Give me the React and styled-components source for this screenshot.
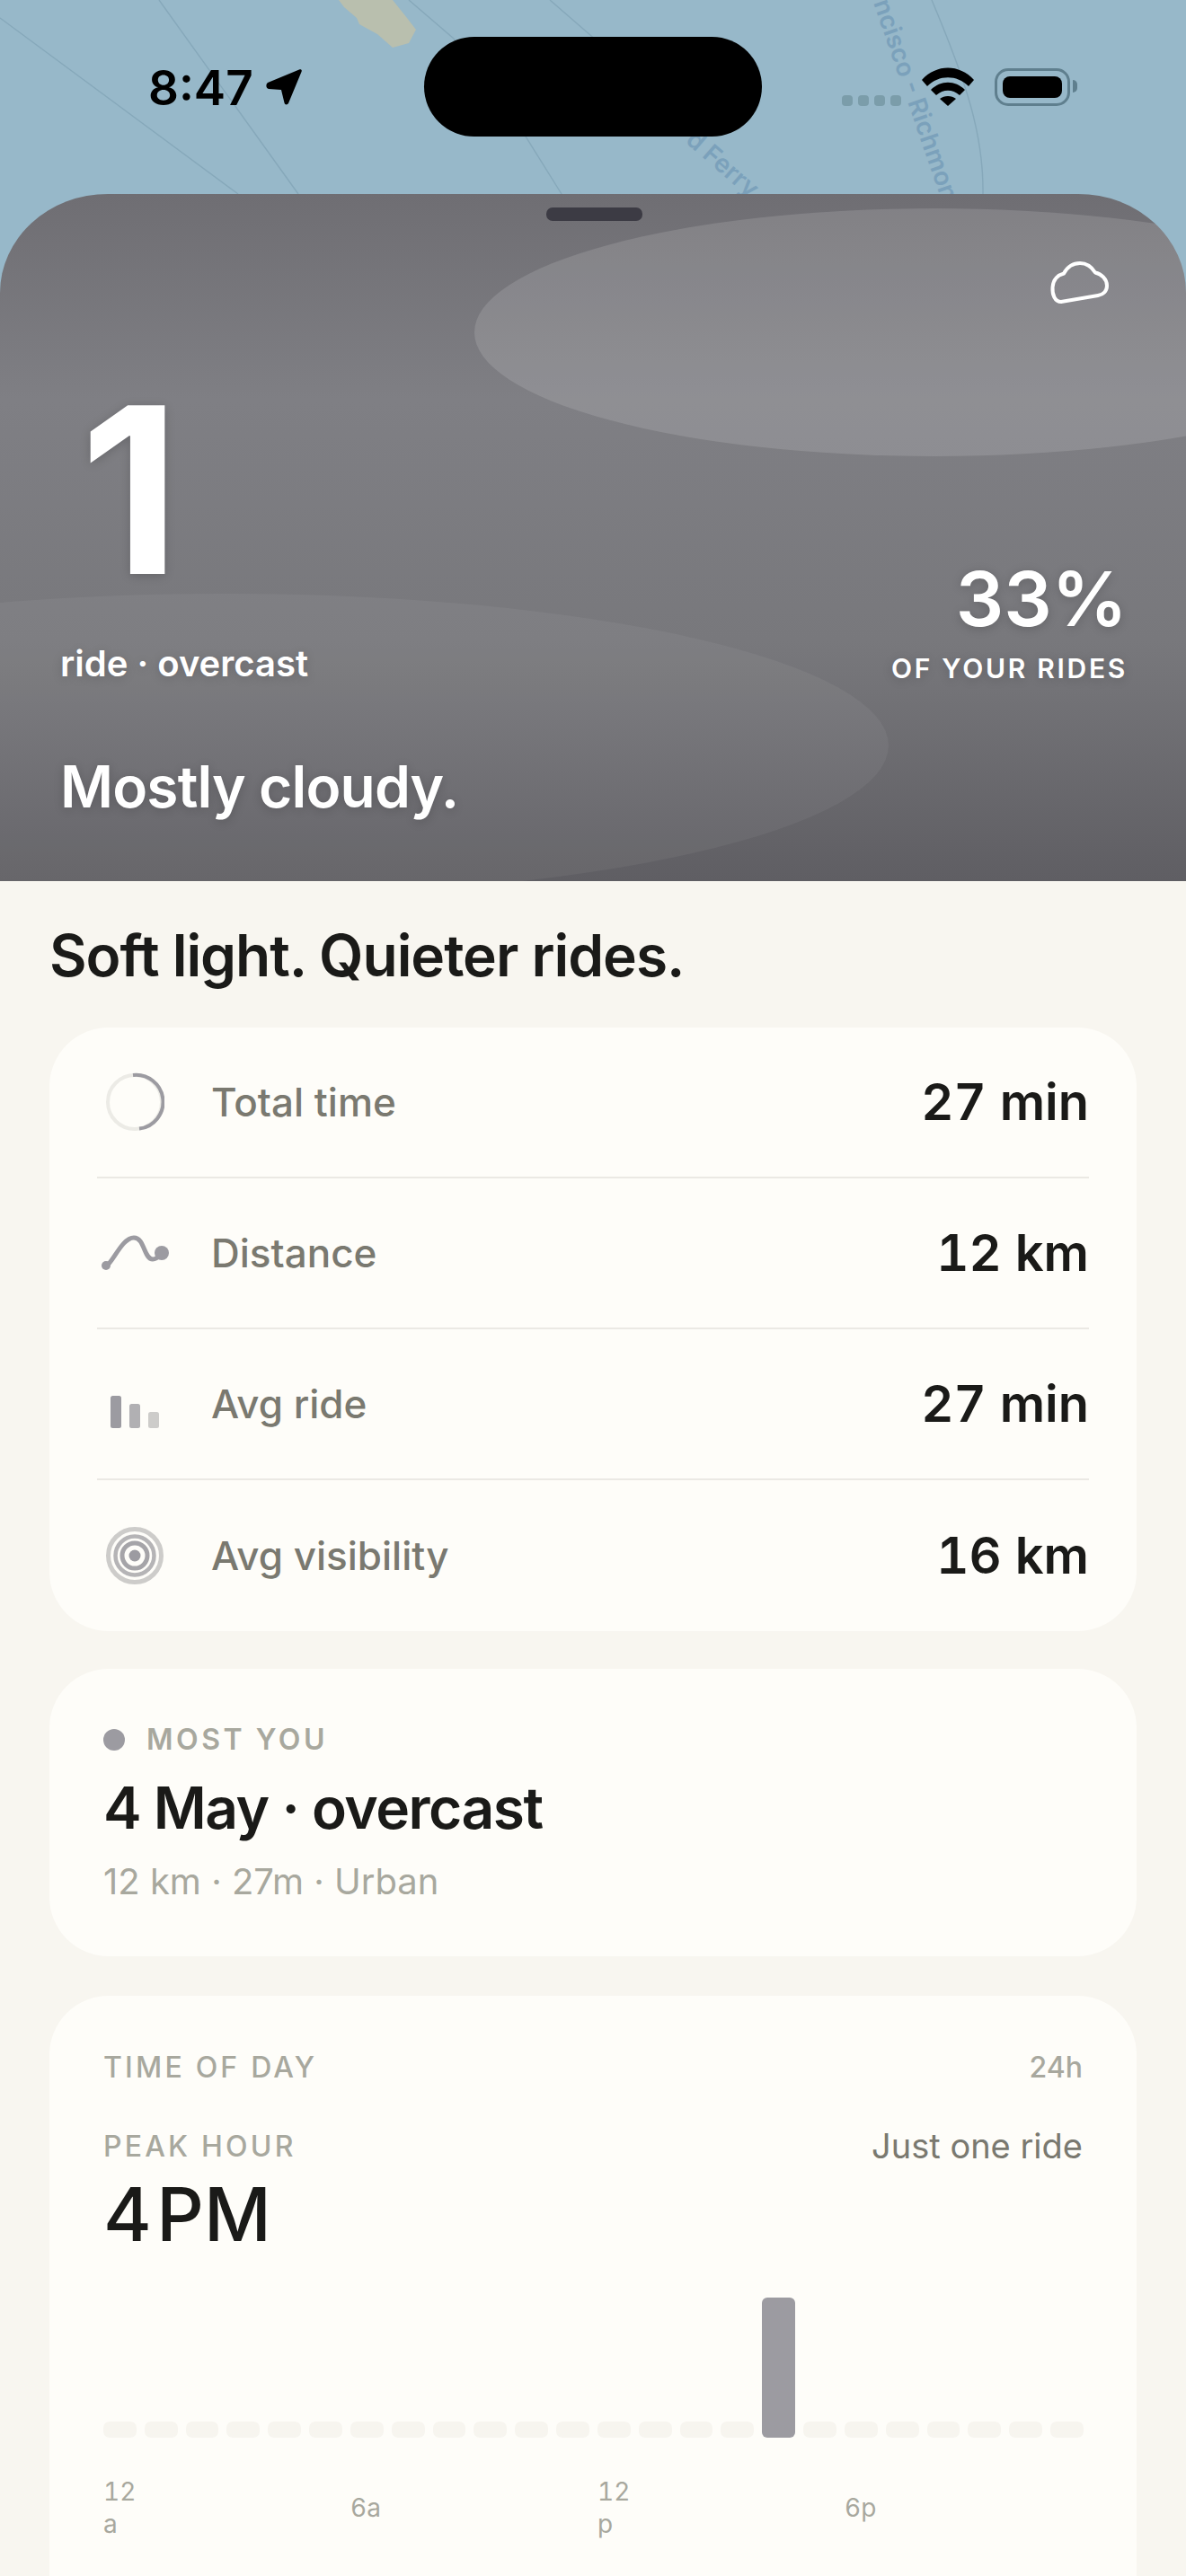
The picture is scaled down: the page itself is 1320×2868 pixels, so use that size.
import React from "react";
import styled, { createGlobalStyle } from "styled-components";

const GlobalStyle = createGlobalStyle`
  html, body {
    margin: 0;
    padding: 0;
    background: #f8f6f0;
  }
  * {
    box-sizing: border-box;
  }
`;

const stats = [
  { icon: "ring", label: "Total time", value: "27 min" },
  { icon: "route", label: "Distance", value: "12 km" },
  { icon: "bars", label: "Avg ride", value: "27 min" },
  { icon: "target", label: "Avg visibility", value: "16 km" },
];

const hours = Array.from({ length: 24 }, (_, i) => i);
const axisLabels = { 0: "12a", 6: "6a", 12: "12p", 18: "6p" };

function StatIcon({ name }) {
  if (name === "ring") {
    return (
      <svg width="66" height="66" viewBox="0 0 66 66" fill="none">
        <circle cx="33" cy="33" r="30" stroke="#ecebe6" strokeWidth="4" />
        <path d="M31 3a30 30 0 0 1 7 59.6" stroke="#9c9ba1" strokeWidth="4" />
      </svg>
    );
  }
  if (name === "route") {
    return (
      <svg width="76" height="40" viewBox="0 0 76 40" fill="none">
        <path d="M6 35C14 30 24 3 37 3c12 0 11 24 21 24 4 0 7-3 10-6" stroke="#9c9ba1" strokeWidth="5" strokeLinecap="round" />
        <circle cx="6" cy="34" r="5" fill="#9c9ba1" />
        <circle cx="68" cy="20" r="8" fill="#9c9ba1" />
      </svg>
    );
  }
  if (name === "bars") {
    return (
      <svg width="54" height="54" viewBox="0 0 54 54">
        <rect x="0" y="18" width="12" height="36" rx="2.5" fill="#9c9ba1" />
        <rect x="21" y="27" width="12" height="27" rx="2.5" fill="#b1b0b3" />
        <rect x="42" y="36" width="12" height="18" rx="2.5" fill="#cdccca" />
      </svg>
    );
  }
  return (
    <svg width="66" height="66" viewBox="0 0 66 66" fill="none">
      <circle cx="33" cy="33" r="29.5" stroke="#cdccca" strokeWidth="5" />
      <circle cx="33" cy="33" r="21.5" stroke="#b5b4b6" strokeWidth="4.5" />
      <circle cx="33" cy="33" r="14" stroke="#a5a4a8" strokeWidth="5" />
      <circle cx="33" cy="33" r="6.5" fill="#9c9ba1" />
    </svg>
  );
}

export default function App() {
  return (
    <>
      <GlobalStyle />
      <Screen>
        <MapHeader>
          <MapDrawing viewBox="0 0 1320 330">
            <rect width="1320" height="330" fill="#97b8c9" />
            <path d="M0 20L265 216M177 0L332 216M455 0L505 43L585 152L640 240M612 0L665 46M1037 0C1075 90 1095 150 1094 216" stroke="#86a8ba" strokeWidth="1.4" fill="none" />
            <path d="M377 0L383 8L397 20L400 27L420 38L437 53L455 48L463 33L453 20L437 0Z" fill="#b9bfae" />
            <MapLabel transform="translate(972 3) rotate(71)">ncisco - Richmond</MapLabel>
            <MapLabel transform="translate(762 158) rotate(41)">d Ferry</MapLabel>
          </MapDrawing>
          <StatusBar>
            <Clock>
              8:47
              <svg width="42" height="42" viewBox="0 0 42 42">
                <path d="M2 15L37 .5c2-1 3.5.5 2.5 2.5L25 38c-1 2-4 2-4.5-.5L17 23 3 22c-3-.5-3.5-5-1-7z" fill="#000" />
              </svg>
            </Clock>
            <Island />
            <StatusIcons>
              <SignalDots>
                <i /><i /><i /><i />
              </SignalDots>
              <svg width="58" height="43" viewBox="0 0 58 43" fill="#000">
                <path d="M0 14C16-4 42-4 58 14l-6 7C39 8 19 8 6 21z" />
                <path d="M10 25c11-11 27-11 38 0l-6 6c-8-7-18-7-26 0z" />
                <path d="M20 35c5-4 13-4 18 0l-9 8z" />
              </svg>
              <Battery><BatteryFill /></Battery>
            </StatusIcons>
          </StatusBar>
        </MapHeader>

        <Hero>
          <Blob $left={528} $top={232} $width={1024} $height={276} $tone={0.13} />
          <Blob $left={-489} $top={661} $width={1478} $height={338} $tone={0.05} />
          <Grabber />
          <CloudMark>
            <svg width="66" height="48" viewBox="0 0 66 48" fill="none">
              <path d="M12 45C5 45 2 37 2.500 29 3 20 9 15 15 13.500 19 6 26 2 33 2c8 0 13 4 17 10.500C57 14 63 20 63 27c0 6-4 10-10 11z" stroke="#fff" strokeWidth="4" strokeLinejoin="round" />
            </svg>
          </CloudMark>
          <HeroNumber>1</HeroNumber>
          <HeroRow>
            <HeroCaption>ride · overcast</HeroCaption>
            <ShareBlock>
              <SharePercent>33%</SharePercent>
              <ShareLabel>OF YOUR RIDES</ShareLabel>
            </ShareBlock>
          </HeroRow>
          <HeroTitle>Mostly cloudy.</HeroTitle>
        </Hero>

        <Content>
          <Tagline>Soft light. Quieter rides.</Tagline>

          <Card>
            {stats.map((s) => (
              <StatRow key={s.label}>
                <IconSlot><StatIcon name={s.icon} /></IconSlot>
                <StatLabel>{s.label}</StatLabel>
                <StatValue>{s.value}</StatValue>
              </StatRow>
            ))}
          </Card>

          <MostCard>
            <Eyebrow><Dot />MOST YOU</Eyebrow>
            <MostTitle>4 May · overcast</MostTitle>
            <MostSub>12 km · 27m · Urban</MostSub>
          </MostCard>

          <TimeCard>
            <SplitRow>
              <SectionLabel>TIME OF DAY</SectionLabel>
              <RangeLabel>24h</RangeLabel>
            </SplitRow>
            <PeakRow>
              <SectionLabel>PEAK HOUR</SectionLabel>
              <PeakNote>Just one ride</PeakNote>
            </PeakRow>
            <PeakValue>4 PM</PeakValue>
            <Chart>
              {hours.map((h) => (
                <HourBar key={h} $active={h === 16} />
              ))}
            </Chart>
            <Axis>
              {hours.map((h) => (
                <AxisLabel key={h}>{axisLabels[h]}</AxisLabel>
              ))}
            </Axis>
          </TimeCard>
        </Content>
      </Screen>
    </>
  );
}

const Screen = styled.div`
  position: relative;
  width: 1320px;
  height: 2868px;
  overflow: hidden;
  background: #f8f6f0;
  font-family: Inter, "Liberation Sans", sans-serif;
`;

const MapHeader = styled.div`
  position: relative;
  height: 330px;
  margin-bottom: -114px;
`;

const MapDrawing = styled.svg`
  position: absolute;
  inset: 0;
  width: 100%;
  height: 100%;
`;

const MapLabel = styled.text`
  font-family: Inter, sans-serif;
  font-size: 28px;
  font-weight: 600;
  fill: #7ba1bb;
`;

const StatusBar = styled.div`
  position: relative;
  display: flex;
  align-items: flex-start;
  height: 152px;
  padding: 41px 0 0 165px;
`;

const Clock = styled.div`
  display: flex;
  align-items: center;
  gap: 14px;
  width: 307px;
  height: 111px;
  padding-top: 3px;
  font-size: 53px;
  font-weight: 600;
  color: #000;
`;

const Island = styled.div`
  width: 376px;
  height: 111px;
  border-radius: 56px;
  background: #000;
`;

const StatusIcons = styled.div`
  display: flex;
  align-items: flex-end;
  margin-left: 89px;
  margin-top: 34px;
  height: 43px;
`;

const SignalDots = styled.div`
  display: flex;
  gap: 6px;
  margin-right: 23px;
  i {
    display: block;
    width: 12px;
    height: 12px;
    border-radius: 4px;
    background: #7b9daa;
  }
`;

const Battery = styled.div`
  position: relative;
  width: 84px;
  height: 42px;
  margin-left: 23px;
  padding: 6px;
  border: 3.5px solid #5f7f8e;
  border-radius: 15px;
  &::after {
    content: "";
    position: absolute;
    right: -11px;
    top: 10px;
    width: 5px;
    height: 14px;
    border-radius: 0 5px 5px 0;
    background: #5f7f8e;
  }
`;

const BatteryFill = styled.div`
  width: 100%;
  height: 100%;
  border-radius: 8px;
  background: #000;
`;

const Hero = styled.section`
  position: relative;
  isolation: isolate;
  display: flex;
  flex-direction: column;
  height: 765px;
  padding: 0 65px 0 67px;
  overflow: hidden;
  color: #fff;
  text-shadow: 0 2px 12px rgba(0, 0, 0, 0.18);
  border-radius: 120px 120px 0 0 / 110px 110px 0 0;
  background: linear-gradient(180deg, #6f6e73 0%, #7f7f84 30%, #78787c 65%, #5f5e63 100%);
`;

const Blob = styled.div`
  position: absolute;
  z-index: -1;
  left: ${(p) => p.$left}px;
  top: ${(p) => p.$top - 216}px;
  width: ${(p) => p.$width}px;
  height: ${(p) => p.$height}px;
  border-radius: 50%;
  background: rgba(255, 255, 255, ${(p) => p.$tone});
`;

const Grabber = styled.div`
  width: 107px;
  height: 15px;
  margin: 15px auto 0;
  border-radius: 7px;
  background: #3c3b44;
`;

const CloudMark = styled.div`
  position: absolute;
  top: 75px;
  right: 85px;
  line-height: 0;
`;

const HeroNumber = styled.div`
  height: 195px;
  margin: 170px 0 0 22px;
  font-size: 258px;
  font-weight: 700;
  line-height: 258px;
  letter-spacing: -0.02em;
`;

const HeroRow = styled.div`
  display: flex;
  justify-content: space-between;
  align-items: flex-end;
  margin-top: 6px;
`;

const HeroCaption = styled.div`
  padding-bottom: 2px;
  font-size: 40px;
  font-weight: 600;
  line-height: 46px;
`;

const ShareBlock = styled.div`
  display: flex;
  flex-direction: column;
  align-items: flex-end;
`;

const SharePercent = styled.div`
  font-size: 84px;
  font-weight: 600;
  line-height: 100px;
`;

const ShareLabel = styled.div`
  margin-top: 7px;
  font-size: 30px;
  font-weight: 600;
  line-height: 40px;
  letter-spacing: 0.09em;
`;

const HeroTitle = styled.h1`
  margin: 72px 0 0;
  font-size: 64px;
  font-weight: 600;
  line-height: 80px;
  letter-spacing: -0.013em;
`;

const Content = styled.main`
  display: flex;
  flex-direction: column;
  padding: 0 55px;
`;

const Tagline = styled.h2`
  margin: 43px 0 40px;
  font-size: 64px;
  font-weight: 600;
  line-height: 80px;
  letter-spacing: -0.016em;
  color: #1a1a18;
`;

const Card = styled.section`
  display: flex;
  flex-direction: column;
  padding: 0 53px;
  border-radius: 66px;
  background: #fefdf9;
`;

const StatRow = styled.div`
  display: flex;
  align-items: center;
  height: 168px;
  border-bottom: 2px solid #ebe9e4;
  &:last-child {
    border-bottom: none;
  }
`;

const IconSlot = styled.div`
  display: flex;
  justify-content: center;
  width: 84px;
  margin-right: 43px;
`;

const StatLabel = styled.span`
  flex: 1;
  font-size: 44px;
  font-weight: 500;
  color: #7a7970;
`;

const StatValue = styled.span`
  font-size: 56px;
  font-weight: 600;
  font-variant-numeric: tabular-nums;
  color: #1a1a18;
`;

const MostCard = styled.section`
  display: flex;
  flex-direction: column;
  height: 320px;
  margin-top: 42px;
  padding: 56px 60px 0;
  border-radius: 66px;
  background: #fefdf9;
`;

const Eyebrow = styled.div`
  display: flex;
  align-items: center;
  gap: 24px;
  font-size: 32px;
  font-weight: 600;
  line-height: 46px;
  letter-spacing: 0.11em;
  color: #a8a89e;
`;

const Dot = styled.span`
  width: 24px;
  height: 24px;
  border-radius: 50%;
  background: #9c9ba1;
`;

const MostTitle = styled.div`
  margin-top: 13px;
  font-size: 64px;
  font-weight: 600;
  line-height: 80px;
  letter-spacing: -0.023em;
  color: #1a1a18;
`;

const MostSub = styled.div`
  margin-top: 17px;
  font-size: 40px;
  font-weight: 400;
  line-height: 50px;
  color: #a8a89e;
`;

const TimeCard = styled.section`
  display: flex;
  flex-direction: column;
  min-height: 720px;
  margin-top: 44px;
  padding: 59px 60px 0;
  border-radius: 66px;
  background: #fefdf9;
`;

const SplitRow = styled.div`
  display: flex;
  justify-content: space-between;
  align-items: center;
  height: 40px;
`;

const PeakRow = styled(SplitRow)`
  margin-top: 48px;
`;

const SectionLabel = styled.span`
  font-size: 32px;
  font-weight: 500;
  letter-spacing: 0.1em;
  color: #a8a89e;
`;

const RangeLabel = styled.span`
  font-size: 32px;
  font-weight: 500;
  color: #a8a89e;
`;

const PeakNote = styled.span`
  font-size: 38px;
  font-weight: 400;
  color: #7a7970;
`;

const PeakValue = styled.div`
  margin-top: 7px;
  font-size: 82px;
  font-weight: 500;
  line-height: 100px;
  word-spacing: -0.2em;
  color: #1a1a18;
`;

const Chart = styled.div`
  display: grid;
  grid-template-columns: repeat(24, 1fr);
  gap: 9px;
  align-items: end;
  height: 156px;
  margin-top: 42px;
  margin-right: -1px;
`;

const HourBar = styled.div`
  height: ${(p) => (p.$active ? "156px" : "18px")};
  border-radius: ${(p) => (p.$active ? "6px" : "7px")};
  background: ${(p) => (p.$active ? "#9c9ba1" : "#f7f5ef")};
`;

const Axis = styled.div`
  display: grid;
  grid-template-columns: repeat(24, minmax(0, 1fr));
  gap: 9px;
  align-items: center;
  margin-top: 42px;
  margin-right: -1px;
`;

const AxisLabel = styled.span`
  font-size: 28px;
  line-height: 36px;
  font-variant-numeric: tabular-nums;
  color: #a8a89e;
  overflow-wrap: anywhere;
`;
